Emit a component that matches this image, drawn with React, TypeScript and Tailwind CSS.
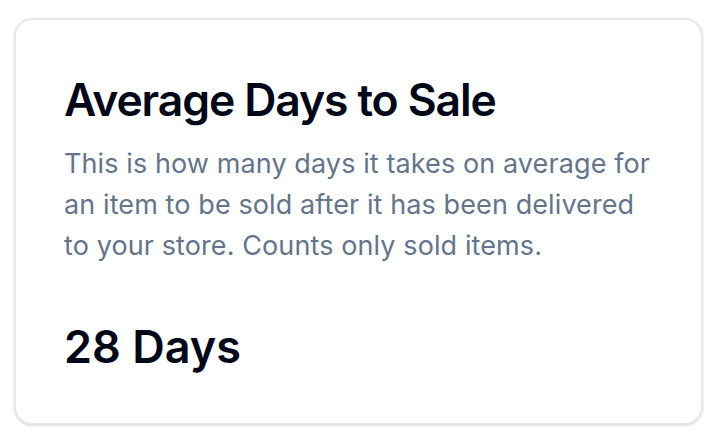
export default function App() {
  return (
    <div className="w-[718px] h-[442px] bg-white pl-[14px] pt-[18px]" style={{ fontFamily: "Inter, 'Noto Sans', sans-serif" }}>
      <div className="w-[689px] h-[407px] rounded-[18px] border-2 border-[#e5e7eb] bg-white shadow-sm flex flex-col">
        <div className="px-[48px] pt-[58px]">
          <h3 className="text-[44.5px] font-semibold leading-none tracking-tight text-[#020817]">Average Days to Sale</h3>
          <p className="mt-[20px] text-[27px] leading-[41px] tracking-[0.1px] text-[#64748b]">
            This is how many days it takes on average for an item to be sold after it has been delivered to your store. Counts only sold items.
          </p>
        </div>
        <div className="px-[48px] pt-[58px]">
          <div className="text-[45px] font-semibold leading-none text-[#020817]">28 Days</div>
        </div>
      </div>
    </div>
  );
}
